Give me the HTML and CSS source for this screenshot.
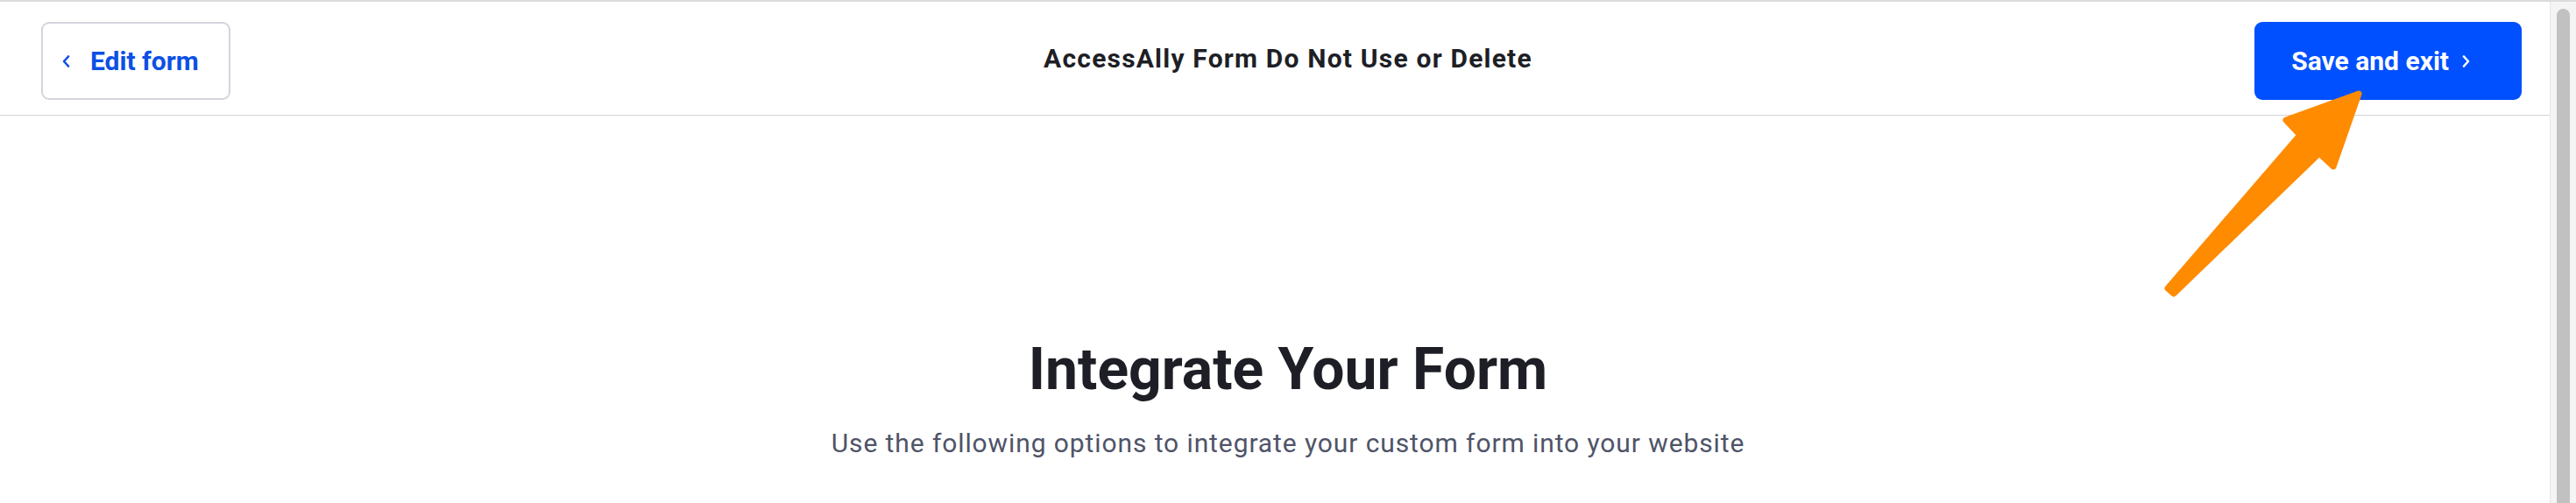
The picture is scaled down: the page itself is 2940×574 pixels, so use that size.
FILE: index.html
```html
<!DOCTYPE html>
<html lang="en">
<head>
  <meta charset="UTF-8" />
  <meta name="viewport" content="width=device-width, initial-scale=1.0" />
  <title>Integrate Your Form</title>
  <link rel="stylesheet" href="styles.css">
</head>
<body>
  <div class="page">
    <!-- Top bar -->
    <header class="topbar">
      <div class="topbar-left">
        <button class="btn btn-outline">
          <svg class="chev" width="12" height="14" viewBox="0 0 12 14"><path d="M8 1.5 L3 7 L8 12.5" fill="none" stroke="currentColor" stroke-width="2.6" stroke-linecap="round" stroke-linejoin="round"/></svg>
          <span>Edit form</span>
        </button>
      </div>
      <div class="topbar-title">AccessAlly Form Do Not Use or Delete</div>
      <div class="topbar-right">
        <button class="btn btn-primary">
          <span>Save and exit</span>
          <svg class="chev" width="12" height="14" viewBox="0 0 12 14"><path d="M4 1.5 L9 7 L4 12.5" fill="none" stroke="currentColor" stroke-width="2.6" stroke-linecap="round" stroke-linejoin="round"/></svg>
        </button>
      </div>
    </header>

    <!-- Intro -->
    <main class="intro">
      <h1>Integrate Your Form</h1>
      <p>Use the following options to integrate your custom form into your website</p>
    </main>

    <!-- callout arrow pointing at the save button -->
    <svg class="callout" width="250" height="250" viewBox="0 0 250 250">
      <polygon points="14,234 165,59 149,42 232,12 203,95 187,80 21,240" fill="#ff8b00" stroke="#ff8b00" stroke-width="7" stroke-linejoin="round"/>
    </svg>

    <div class="scrollbar"><div class="scrollbar-thumb"></div></div>
  </div>
</body>
</html>
```

FILE: styles.css
```css
body {
  margin: 0;
  font-family: Roboto, 'Liberation Sans', sans-serif;
  background-color: #fff;
  color: #1e1f26;
  overflow: hidden;
}
.page {
  position: relative;
  height: 574px;
  overflow: hidden;
  border-top: 2px solid #dcdcdf;
  box-sizing: border-box;
}
.topbar {
  display: grid;
  grid-template-columns: 1fr auto 1fr;
  align-items: center;
  height: 130px;
  margin-right: 30px;
  padding: 0 32px 0 47px;
  border-bottom: 1px solid #d3d3dc;
  box-sizing: border-box;
}
.topbar-left {
  justify-self: start;
  margin-top: 6px;
}
.topbar-right {
  justify-self: end;
  margin-top: 6px;
}
.topbar-title {
  padding-left: 15px;
  font-size: 30px;
  font-weight: 700;
  letter-spacing: 1.2px;
  color: #1e1f26;
}
.btn {
  display: flex;
  align-items: center;
  height: 89px;
  font-family: inherit;
  font-size: 30px;
  font-weight: 700;
  border-radius: 9px;
  cursor: pointer;
  box-sizing: border-box;
}
.btn-outline {
  gap: 21px;
  padding: 0 34px 0 21px;
  background-color: #fff;
  color: #0b50e6;
  border: 2px solid #d4d4de;
}
.btn-primary {
  gap: 13px;
  padding: 0 58px 0 42px;
  background-color: #0050ff;
  color: #fff;
  border: none;
}
.chev {
  flex-shrink: 0;
}
.intro {
  text-align: center;
  padding-top: 250px;
}
.intro h1 {
  margin: 0;
  font-size: 66px;
  font-weight: 700;
  line-height: 80px;
  color: #1e1f26;
}
.intro p {
  margin: 24px 0 0;
  font-size: 30px;
  line-height: 40px;
  letter-spacing: 0.9px;
  color: #4f5468;
}
.callout {
  position: absolute;
  left: 2460px;
  top: 93px;
  pointer-events: none;
}
.scrollbar {
  position: absolute;
  top: 0;
  right: 0;
  bottom: 0;
  width: 29px;
  overflow: hidden;
  background-color: #f4f4f4;
  border-left: 1px solid #e6e6e6;
}
.scrollbar-thumb {
  margin: 8px 0 0 7px;
  width: 15px;
  height: 600px;
  background-color: #c1c1c1;
  border-radius: 8px 8px 0 0;
}
```
